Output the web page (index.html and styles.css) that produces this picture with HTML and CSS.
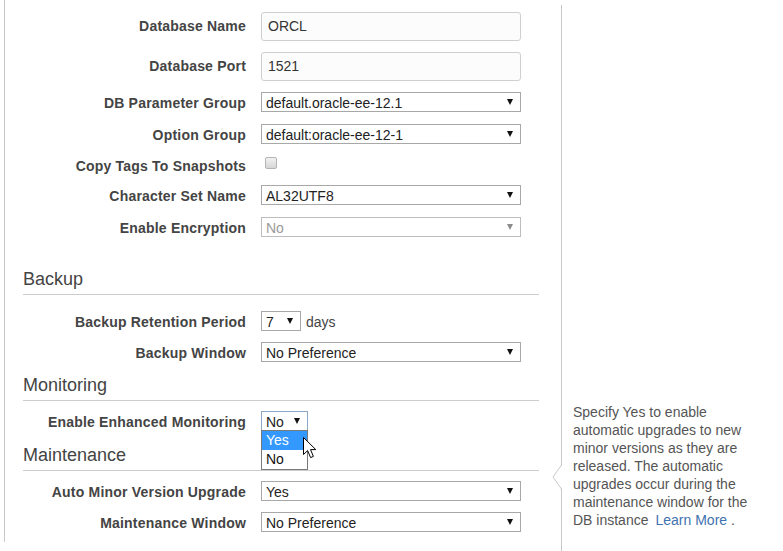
FILE: index.html
```html
<!DOCTYPE html>
<html>
<head>
<meta charset="utf-8">
<title>DB Settings</title>
<link rel="stylesheet" href="styles.css">
</head>
<body>
<div class="page">
  <div class="form-panel">
    <div class="row row-text">
      <div class="label">Database Name</div>
      <div class="input">ORCL</div>
    </div>
    <div class="row row-text">
      <div class="label">Database Port</div>
      <div class="input">1521</div>
    </div>
    <div class="row">
      <div class="label">DB Parameter Group</div>
      <div class="select"><span>default.oracle-ee-12.1</span><i class="caret"></i></div>
    </div>
    <div class="row">
      <div class="label">Option Group</div>
      <div class="select"><span>default:oracle-ee-12-1</span><i class="caret"></i></div>
    </div>
    <div class="row row-check">
      <div class="label">Copy Tags To Snapshots</div>
      <span class="checkbox"></span>
    </div>
    <div class="row">
      <div class="label">Character Set Name</div>
      <div class="select"><span>AL32UTF8</span><i class="caret"></i></div>
    </div>
    <div class="row">
      <div class="label">Enable Encryption</div>
      <div class="select disabled"><span>No</span><i class="caret"></i></div>
    </div>

    <h3 class="section-title first">Backup</h3>
    <div class="row tight">
      <div class="label">Backup Retention Period</div>
      <div class="controls">
        <div class="select small"><span>7</span><i class="caret"></i></div>
        <span class="unit">days</span>
      </div>
    </div>
    <div class="row tight">
      <div class="label">Backup Window</div>
      <div class="select"><span>No Preference</span><i class="caret"></i></div>
    </div>

    <h3 class="section-title">Monitoring</h3>
    <div class="row">
      <div class="label">Enable Enhanced Monitoring</div>
      <div class="select open"><span>No</span><i class="caret"></i>
        <ul class="dropdown">
          <li class="active">Yes</li>
          <li>No</li>
        </ul>
        <svg class="cursor" width="14" height="22" viewBox="0 0 14 22"><path d="M0.5 0.5 L0.5 17.5 L4.6 13.6 L7.6 20.6 L10.4 19.4 L7.5 12.6 L12.8 12.6 Z" fill="#fff" stroke="#000" stroke-width="1" stroke-linejoin="miter"/></svg>
      </div>
    </div>

    <h3 class="section-title">Maintenance</h3>
    <div class="row tight">
      <div class="label">Auto Minor Version Upgrade</div>
      <div class="select"><span>Yes</span><i class="caret"></i></div>
    </div>
    <div class="row last">
      <div class="label">Maintenance Window</div>
      <div class="select"><span>No Preference</span><i class="caret"></i></div>
    </div>
  </div>

  <div class="help">
    <div class="help-text">
      <svg class="help-arrow" width="10" height="24" viewBox="0 0 10 24"><polygon points="10,0 1,12 10,24" fill="#fff"/><polyline points="9.5,0 1,12 9.5,24" fill="none" stroke="#c8c8c8" stroke-width="1"/></svg>
      <p class="help-body">Specify Yes to enable automatic upgrades to new minor versions as they are released. The automatic upgrades occur during the maintenance window for the</p>
      <p class="help-last"><span>DB instance</span><a class="link" href="#">Learn More</a><span class="dot">.</span></p>
    </div>
  </div>
</div>
</body>
</html>
```
FILE: styles.css
```css
* { box-sizing: border-box; }
html, body { margin: 0; padding: 0; background: #fff; }
body {
  font-family: "Liberation Sans", Arial, sans-serif;
  font-size: 14px;
  color: #444;
  height: 551px;
  overflow: hidden;
}
.page { display: flex; align-items: flex-start; }

.form-panel {
  margin-left: 4px;
  width: 557px;
  border-left: 1px solid #c8c8c8;
  padding: 12px 0 10px;
  display: flex;
  flex-direction: column;
}

.row {
  display: flex;
  align-items: baseline;
  margin-bottom: 12px;
}
.row.row-text, .row.tight { margin-bottom: 11px; }
.row.last { margin-bottom: 0; }
.row.row-check { margin-bottom: 8px; }

.label {
  flex: none;
  width: 241px;
  margin-right: 15px;
  text-align: right;
  font-weight: bold;
  line-height: 17px;
  letter-spacing: 0.2px;
  color: #444;
}
.row-check .label { line-height: 21px; }

.input {
  width: 260px;
  height: 29px;
  border: 1px solid #cfcfcf;
  border-radius: 3px;
  background: #fcfcfc;
  padding: 0 6px;
  line-height: 27px;
  color: #333;
}

.select {
  position: relative;
  width: 260px;
  height: 20px;
  border: 1px solid #a8a8a8;
  background: #fff;
  padding: 1px 7px 0 4px;
  line-height: 18px;
  color: #222;
  display: flex;
  justify-content: space-between;
  align-items: baseline;
}
.caret {
  align-self: center;
  width: 0;
  height: 0;
  border-left: 3px solid transparent;
  border-right: 3px solid transparent;
  border-top: 6px solid #111;
  margin-top: -1px;
}
.select.disabled { border-color: #bdbdbd; color: #9a9a9a; }
.select.disabled .caret { border-top-color: #8c8c8c; }
.select.small { width: 40px; }
.select.open { width: 47px; border-color: #8ea6c8; }

.controls { display: flex; align-items: baseline; }
.unit { margin-left: 5px; color: #444; }

.checkbox {
  align-self: flex-start;
  display: inline-block;
  width: 12px;
  height: 12px;
  margin: 1px 0 0 4px;
  border: 1px solid #b4b4b4;
  border-radius: 2px;
  background: linear-gradient(#f2f2f2, #d6d6d6);
}

.section-title {
  margin: 2px 22px 10px 18px;
  padding: 0 0 4px;
  font-size: 18px;
  line-height: 21px;
  font-weight: normal;
  color: #444;
  border-bottom: 1px solid #cdcdcd;
}
.section-title.first { margin-top: 20px; margin-bottom: 16px; }

.dropdown {
  position: absolute;
  left: -1px;
  top: 18px;
  width: 47px;
  margin: 0;
  padding: 0;
  list-style: none;
  border: 1px solid #7a7a7a;
  background: #fff;
  z-index: 2;
}
.dropdown li {
  height: 19px;
  line-height: 19px;
  padding-left: 4px;
  color: #111;
}
.dropdown li.active { background: #3399ff; color: #fff; }

.cursor {
  position: absolute;
  left: 41px;
  top: 25px;
  z-index: 3;
}

.help {
  margin-top: 5px;
  height: 546px;
  border-left: 1px solid #c8c8c8;
  padding: 0 0 22px 11px;
  display: flex;
  flex-direction: column;
  justify-content: flex-end;
}
.help-text {
  position: relative;
  width: 185px;
  line-height: 18px;
  color: #555;
}
.help-body, .help-last { margin: 0; }
.help-last { display: flex; }
.help-arrow {
  position: absolute;
  left: -21px;
  top: 62px;
}
.link { color: #3f72b0; text-decoration: none; margin-left: 7px; }
.dot { margin-left: 4px; }
```
